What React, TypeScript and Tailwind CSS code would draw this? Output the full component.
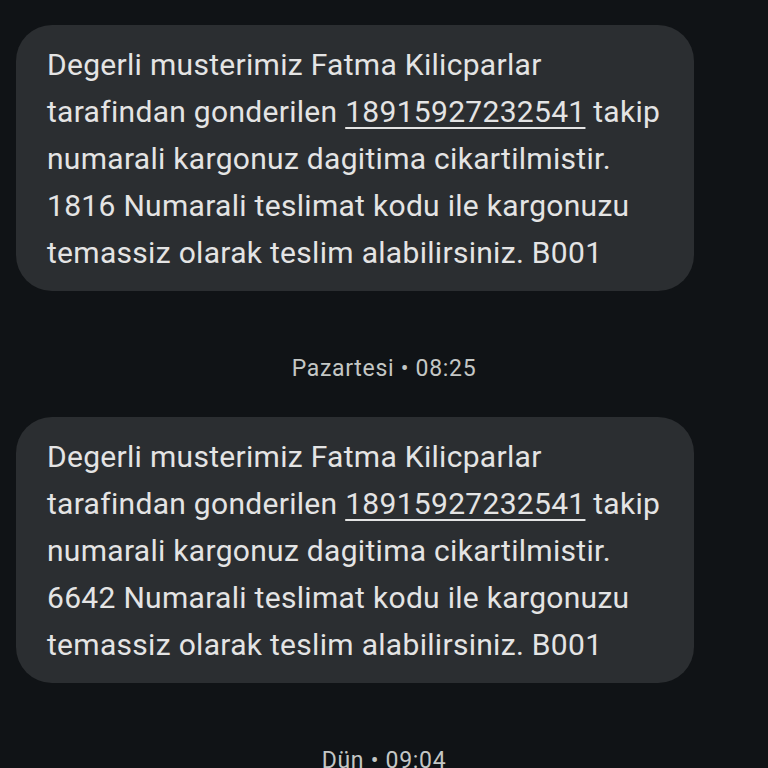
import React from "react";

const lines = (code: string) => [
  <>Degerli musterimiz Fatma Kilicparlar</>,
  <>
    tarafindan gonderilen{" "}
    <span className="underline decoration-2 underline-offset-[5px]">18915927232541</span> takip
  </>,
  <>numarali kargonuz dagitima cikartilmistir.</>,
  <>{code} Numarali teslimat kodu ile kargonuzu</>,
  <>temassiz olarak teslim alabilirsiniz. B001</>,
];

function Bubble({ code }: { code: string }) {
  return (
    <div className="ml-4 w-[678px] rounded-[36px] bg-[#2b2e31] pl-[31px] pr-4 pt-[16px] pb-[15px] text-[30px] leading-[47px] tracking-[0.3px] text-[#e4e4e4]">
      {lines(code).map((l, i) => (
        <div key={i} className="whitespace-nowrap">
          {l}
        </div>
      ))}
    </div>
  );
}

function Stamp({ children }: { children: React.ReactNode }) {
  return (
    <div className="pt-[63px] pb-[33px] text-center text-[23px] leading-[30px] tracking-[0.7px] text-[#c4c7c5]">
      {children}
    </div>
  );
}

export default function App() {
  return (
    <div
      className="h-[768px] w-[768px] overflow-hidden bg-[#101316] pt-[25px]"
      style={{ fontFamily: "Roboto, 'Noto Sans', sans-serif" }}
    >
      <Bubble code="1816" />
      <Stamp>Pazartesi • 08:25</Stamp>
      <Bubble code="6642" />
      <Stamp>Dün • 09:04</Stamp>
    </div>
  );
}
